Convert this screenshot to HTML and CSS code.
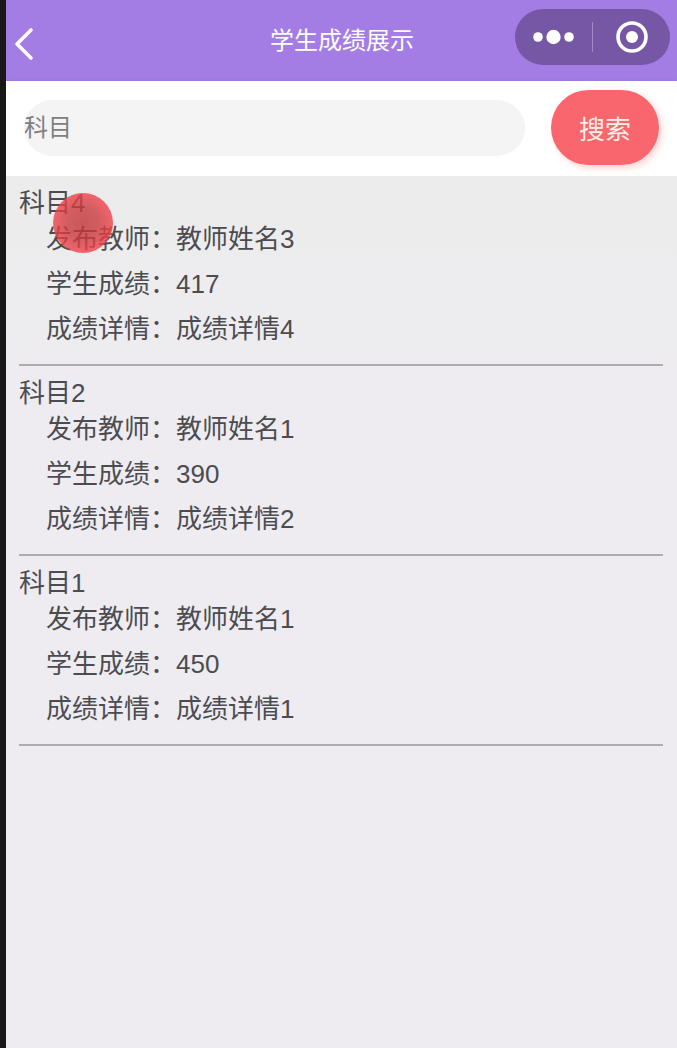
FILE: index.html
```html
<!DOCTYPE html>
<html lang="zh-CN">
<head>
    <meta charset="UTF-8">
    <meta name="viewport" content="width=device-width, initial-scale=1.0">
    <title>学生成绩展示</title>
    <link rel="stylesheet" href="styles.css">
</head>
<body>

    <header class="navbar">
        <button type="button" class="back" aria-label="返回">
            <svg width="20" height="34" viewBox="0 0 20 34" fill="none" stroke="#fff" stroke-width="3.600" stroke-linecap="round" stroke-linejoin="round">
                <path d="M17 3 L3 17 L17 31"/>
            </svg>
        </button>
        <h1>学生成绩展示</h1>
        <div class="capsule">
            <button type="button" aria-label="更多">
                <svg width="42" height="16" viewBox="0 0 42 16" fill="#fff">
                    <circle cx="5" cy="8" r="4.800"/>
                    <circle cx="20.500" cy="8" r="7.200"/>
                    <circle cx="36" cy="8" r="4.800"/>
                </svg>
            </button>
            <button type="button" aria-label="关闭">
                <svg width="34" height="34" viewBox="0 0 34 34">
                    <circle cx="17" cy="17" r="14" fill="none" stroke="#fff" stroke-width="3.600"/>
                    <circle cx="17" cy="17" r="6" fill="#fff"/>
                </svg>
            </button>
        </div>
    </header>

    <form class="search">
        <input type="text" name="subject" placeholder="科目" aria-label="科目">
        <button type="button">搜索</button>
    </form>

    <main class="list">
        <section class="item">
            <h2>科目4</h2>
            <p>发布教师：教师姓名3</p>
            <p>学生成绩：417</p>
            <p>成绩详情：成绩详情4</p>
            <span class="touch"></span>
        </section>
        <section class="item">
            <h2>科目2</h2>
            <p>发布教师：教师姓名1</p>
            <p>学生成绩：390</p>
            <p>成绩详情：成绩详情2</p>
        </section>
        <section class="item">
            <h2>科目1</h2>
            <p>发布教师：教师姓名1</p>
            <p>学生成绩：450</p>
            <p>成绩详情：成绩详情1</p>
        </section>
    </main>

</body>
</html>
```
FILE: styles.css
```css
* {
    box-sizing: border-box;
}

body {
    margin: 0;
    min-height: 100vh;
    border-left: 6px solid #181818;
    background-color: #eeecf0;
    color: #4c4c50;
    font-family: "Liberation Sans", "Noto Sans CJK SC", sans-serif;
    font-size: 26px;
}

button,
input {
    font-family: inherit;
    border: none;
    padding: 0;
}

button {
    background: none;
    cursor: pointer;
}

/* top bar */
.navbar {
    display: grid;
    grid-template-columns: 1fr auto 1fr;
    align-items: center;
    height: 81px;
    padding: 0 7px 0 8px;
    background-color: #a37de3;
    color: #fff;
}

.navbar h1 {
    margin: 0;
    font-size: 24px;
    font-weight: normal;
    line-height: 36px;
}

.back {
    justify-self: start;
    display: flex;
    padding-top: 6px;
}

.capsule {
    justify-self: end;
    display: flex;
    align-items: center;
    width: 155px;
    height: 56px;
    margin-bottom: 8px;
    border-radius: 28px;
    background-color: #7657a5;
}

.capsule button {
    flex: 1;
    display: flex;
    align-items: center;
    justify-content: center;
    height: 30px;
}

.capsule button + button {
    border-left: 1px solid #a08ac6;
}

/* search */
.search {
    display: flex;
    align-items: center;
    gap: 26px;
    height: 95px;
    padding: 0 18px 2px;
    background-color: #fff;
    box-shadow: 0 1px 6px rgba(0, 0, 0, 0.08);
}

.search input {
    flex: 1;
    min-width: 0;
    height: 56px;
    border-radius: 28px;
    background-color: #f4f4f4;
    color: #4c4c50;
    font-size: 24px;
    outline: none;
}

.search input::placeholder {
    color: #808080;
    opacity: 1;
}

.search button {
    width: 108px;
    height: 75px;
    border-radius: 38px;
    background-color: #f9666d;
    box-shadow: 3px 3px 6px rgba(249, 102, 109, 0.3);
    color: #fff0e6;
    font-size: 26px;
}

/* scores */
.list {
    padding: 0 14px 0 13px;
    background: linear-gradient(#ececec, #eeecf0 200px);
}

.item {
    position: relative;
    padding: 13px 0 12px;
    border-bottom: 2px solid #aeacb1;
}

.item h2 {
    margin: 0;
    font-size: 26px;
    font-weight: normal;
    line-height: 28px;
}

.item p {
    margin: 0;
    padding-left: 27px;
    line-height: 45px;
}

.touch {
    position: absolute;
    top: 17px;
    left: 34px;
    width: 60px;
    height: 60px;
    border-radius: 50%;
    background: radial-gradient(circle, rgba(190, 50, 54, 0.8) 0, rgba(205, 58, 62, 0.8) 40%, rgba(242, 66, 74, 0.8) 70%);
}
```
